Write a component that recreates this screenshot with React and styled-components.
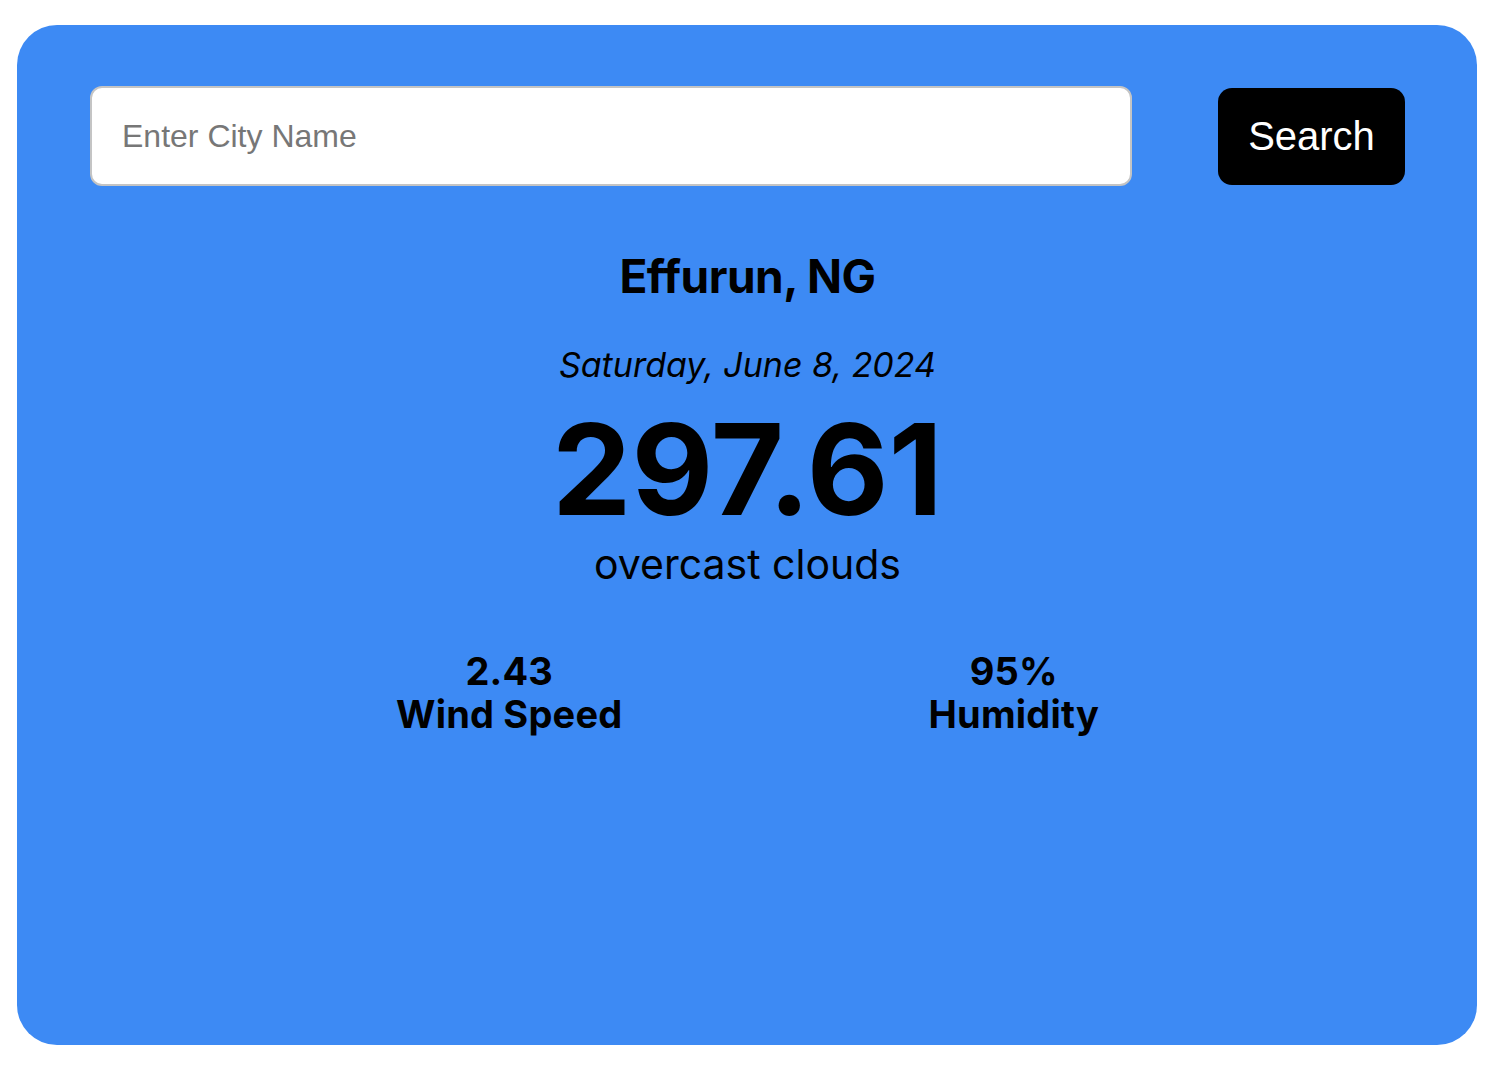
import styled, { createGlobalStyle } from 'styled-components';

const GlobalStyle = createGlobalStyle`
  body {
    margin: 0;
    background: #ffffff;
    font-family: Inter, "Noto Sans", sans-serif;
  }
`;

export default function App() {
  return (
    <>
      <GlobalStyle />
      <Page>
        <Card>
          <SearchRow>
            <CityInput placeholder='Enter City Name' />
            <SearchButton>Search</SearchButton>
          </SearchRow>

          <Weather>
            <City>Effurun, NG</City>
            <DateLine>Saturday, June 8, 2024</DateLine>
            <Temp>297.61</Temp>
            <Desc>overcast clouds</Desc>
          </Weather>

          <Stats>
            <Stat>
              <span>2.43</span>
              <span>Wind Speed</span>
            </Stat>
            <Stat>
              <span>95%</span>
              <span>Humidity</span>
            </Stat>
          </Stats>
        </Card>
      </Page>
    </>
  );
}

const Page = styled.div`
  padding: 25px 22px 34px 17px;
`;

const Card = styled.div`
  height: 1020px;
  box-sizing: border-box;
  background-color: #3d8af4;
  border-radius: 40px;
  padding: 61px 72px 0 73px;
`;

const SearchRow = styled.div`
  display: flex;
  align-items: center;
  gap: 86px;
`;

const CityInput = styled.input`
  flex: 1;
  height: 100px;
  box-sizing: border-box;
  border: 2px solid #c4c4c4;
  border-radius: 12px;
  padding: 0 30px;
  font-family: "Liberation Sans", Arial, sans-serif;
  font-size: 32px;
  color: #222;
  background: #fff;
  outline: none;

  &::placeholder {
    color: #777;
  }
`;

const SearchButton = styled.button`
  width: 187px;
  height: 97px;
  border: none;
  border-radius: 14px;
  background: #000;
  color: #fff;
  font-family: "Liberation Sans", Arial, sans-serif;
  font-size: 40px;
  cursor: pointer;
`;

const Weather = styled.div`
  display: flex;
  flex-direction: column;
  align-items: center;
  color: #000;
  margin-top: 62px;
`;

const City = styled.h1`
  margin: 0;
  font-size: 46px;
  font-weight: 700;
  line-height: 56px;
  letter-spacing: -0.5px;
`;

const DateLine = styled.p`
  margin: 40px 0 0;
  font-size: 34px;
  font-style: italic;
  line-height: 42px;
`;

const Temp = styled.div`
  margin-top: 13px;
  font-size: 126px;
  font-weight: 700;
  line-height: 140px;
`;

const Desc = styled.p`
  margin: 0;
  font-size: 41px;
  line-height: 50px;
`;

const Stats = styled.div`
  display: flex;
  justify-content: space-between;
  width: 703px;
  margin: 61px auto 0;
`;

const Stat = styled.div`
  display: flex;
  flex-direction: column;
  align-items: center;
  font-size: 38px;
  font-weight: 700;
  line-height: 43px;
  letter-spacing: 0.2px;
  color: #000;
`;
